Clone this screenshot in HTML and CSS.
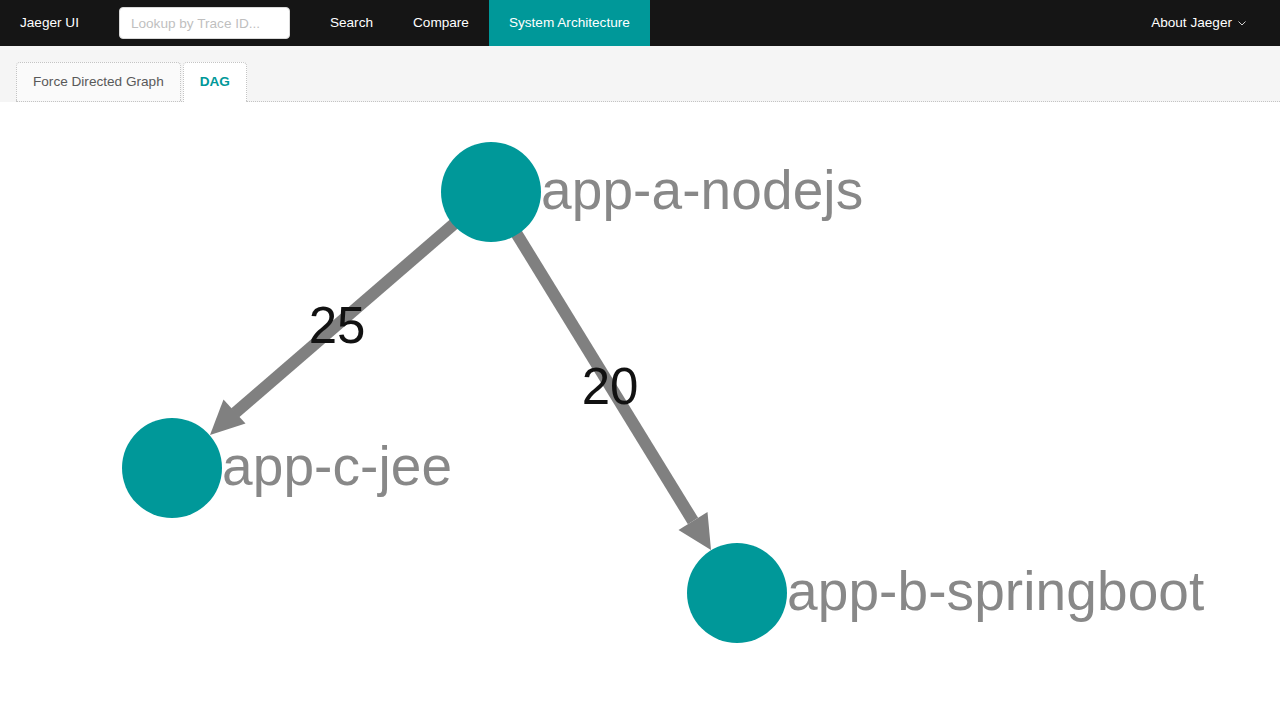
FILE: index.html
```html
<!DOCTYPE html>
<html lang="en">
<head>
<meta charset="utf-8">
<title>Jaeger UI</title>
<link rel="stylesheet" href="styles.css">
</head>
<body>
<header class="topnav">
  <div class="brand">Jaeger UI</div>
  <input class="lookup" type="text" placeholder="Lookup by Trace ID...">
  <nav class="menu">
    <a class="menu-item">Search</a>
    <a class="menu-item">Compare</a>
    <a class="menu-item active">System Architecture</a>
  </nav>
  <div class="about">
    <span>About Jaeger</span>
    <svg class="chev" width="8" height="5" viewBox="0 0 8 5"><path d="M0.5 0.5 L4 4 L7.5 0.5" fill="none" stroke="#cfcfcf" stroke-width="1"/></svg>
  </div>
</header>
<section class="tabs-wrap">
  <div class="tabbar">
    <div class="tab">Force Directed Graph</div>
    <div class="tab active">DAG</div>
  </div>
</section>
<main class="canvas">
  <svg class="dag" width="1280" height="618" viewBox="0 102 1280 618">
    <g class="edges">
      <line x1="491" y1="192" x2="235" y2="413" stroke="#808080" stroke-width="12"/>
      <polygon points="210,435 245.5,423.5 223.5,399.5" fill="#808080"/>
      <line x1="491" y1="192" x2="693" y2="521" stroke="#808080" stroke-width="12"/>
      <polygon points="711,550 707.5,512 678.5,530" fill="#808080"/>
    </g>
    <g class="nodes">
      <circle cx="491" cy="192" r="50" fill="#009899"/>
      <circle cx="172" cy="468" r="50" fill="#009899"/>
      <circle cx="737" cy="593" r="50" fill="#009899"/>
    </g>
    <g class="node-labels">
      <text x="541" y="209">app-a-nodejs</text>
      <text x="222" y="485">app-c-jee</text>
      <text x="787" y="610">app-b-springboot</text>
    </g>
    <g class="edge-labels">
      <text x="337" y="343">25</text>
      <text x="610" y="404">20</text>
    </g>
  </svg>
</main>
</body>
</html>
```

FILE: styles.css
```css
html, body {
  margin: 0;
  padding: 0;
  background: #fff;
  overflow: hidden;
  font-family: "Liberation Sans", Arial, sans-serif;
  font-size: 13.6px;
}

.topnav {
  display: flex;
  align-items: center;
  height: 46px;
  background: #151515;
  color: #fff;
  padding-right: 14px;
}

.brand {
  padding: 0 20px;
  line-height: 46px;
}

.lookup {
  margin-left: 20px;
  width: 171px;
  height: 32px;
  box-sizing: border-box;
  border: 1px solid #d9d9d9;
  border-radius: 4px;
  padding: 4px 11px;
  font-family: "Liberation Sans", Arial, sans-serif;
  font-size: 13.6px;
  outline: none;
}
.lookup::placeholder {
  color: #bfbfbf;
}

.menu {
  display: flex;
  margin-left: 20px;
  height: 46px;
}
.menu-item {
  padding: 0 20px;
  line-height: 46px;
  color: #fff;
}
.menu-item.active {
  background: #009899;
}

.about {
  margin-left: auto;
  display: flex;
  align-items: center;
  padding: 0 20px;
  line-height: 46px;
}
.chev {
  margin-left: 6px;
  margin-top: 1px;
}

.tabs-wrap {
  background: #f5f5f5;
  padding: 16px 0 0 16px;
}
.tabbar {
  display: flex;
  border-bottom: 1px dotted #c4c4c4;
}
.tab {
  height: 38px;
  line-height: 38px;
  padding: 0 16px;
  border: 1px dotted #c4c4c4;
  border-bottom: none;
  border-radius: 4px 4px 0 0;
  margin-right: 2px;
  background: #fafafa;
  color: #595959;
}
.tab.active {
  background: #fff;
  color: #009899;
  font-weight: bold;
  height: 39px;
  margin-bottom: -1px;
}

.canvas {
  display: block;
}
.dag {
  display: block;
}
.node-labels text {
  font-family: "Liberation Sans", Arial, sans-serif;
  font-size: 55px;
  letter-spacing: 0.1px;
  fill: #888888;
}
.edge-labels text {
  font-family: "Liberation Sans", Arial, sans-serif;
  font-size: 51px;
  fill: #111111;
  text-anchor: middle;
}
```
